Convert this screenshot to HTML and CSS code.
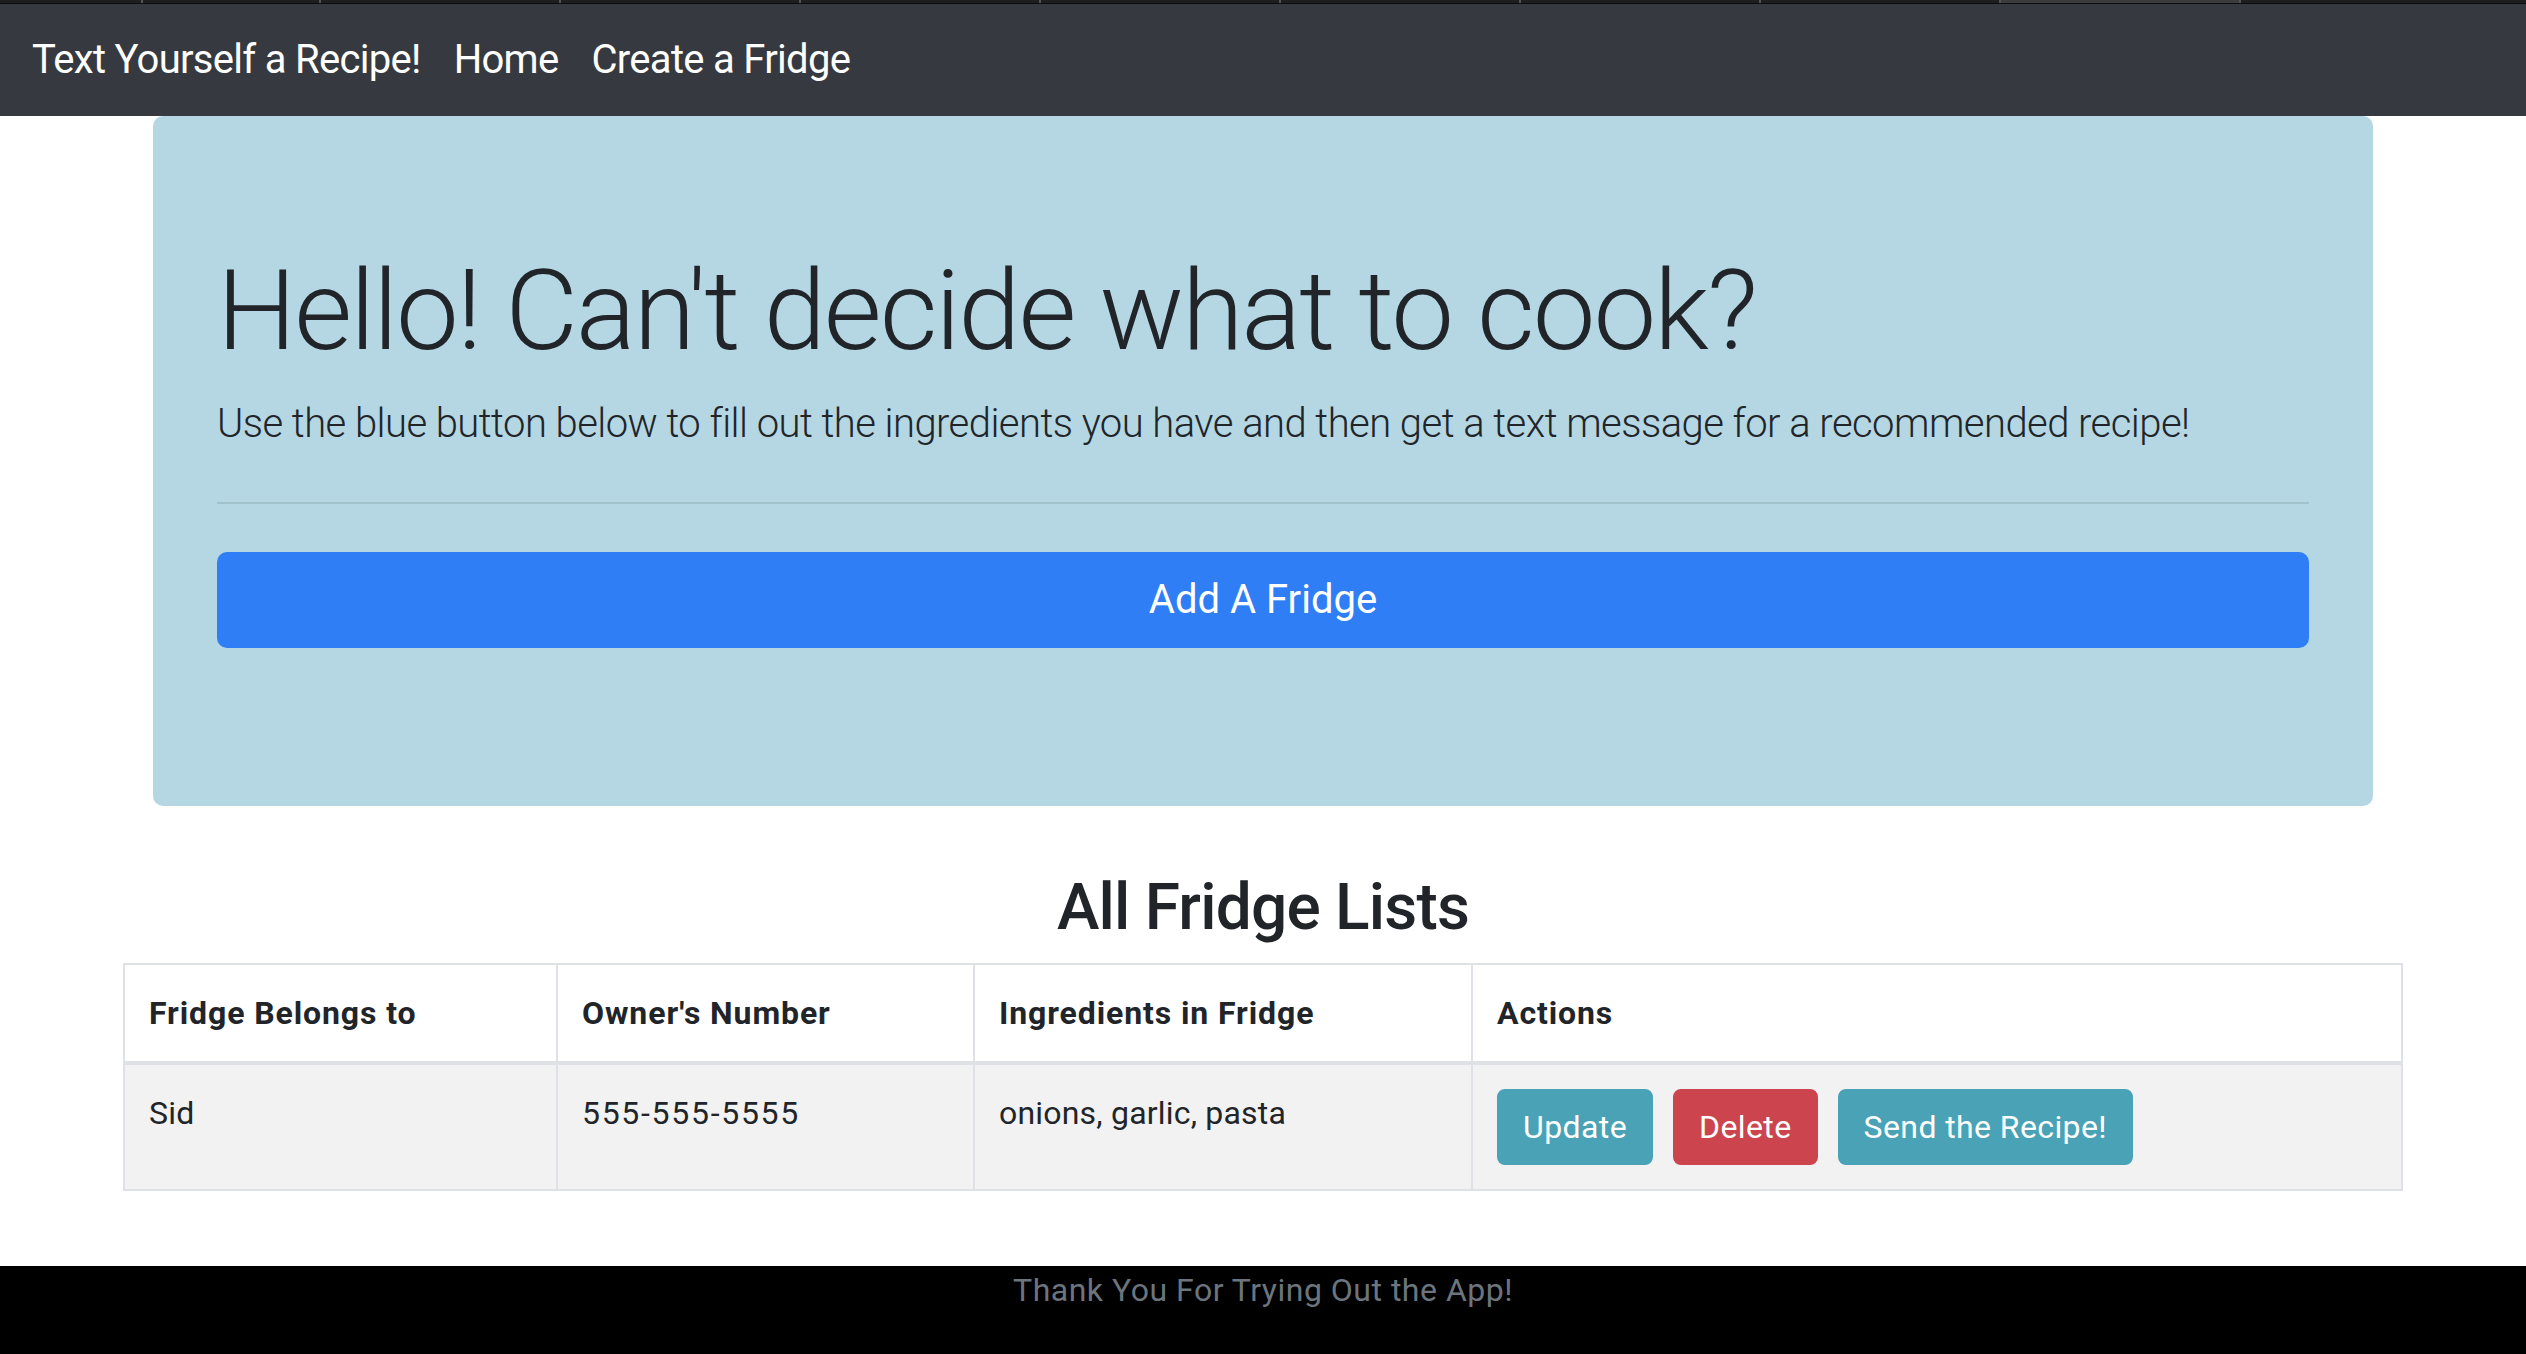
FILE: index.html
```html
<!DOCTYPE html>
<html lang="en">
<head>
<meta charset="utf-8">
<title>Text Yourself a Recipe!</title>
<link rel="stylesheet" href="styles.css">
</head>
<body>
<div class="tabstrip">
  <span class="tab tab-first"></span>
  <span class="tab tab-sm"></span>
  <span class="tab"></span>
  <span class="tab"></span>
  <span class="tab"></span>
  <span class="tab"></span>
  <span class="tab"></span>
  <span class="tab"></span>
  <span class="tab"></span>
  <span class="tab tab-active"></span>
  <span class="tab tab-last"></span>
</div>
<nav class="navbar">
  <a class="nav-item" href="#">Text Yourself a Recipe!</a>
  <a class="nav-item" href="#">Home</a>
  <a class="nav-item" href="#">Create a Fridge</a>
</nav>
<main class="container">
  <section class="jumbotron">
    <h1 class="display">Hello! Can't decide what to cook?</h1>
    <p class="lead">Use the blue button below to fill out the ingredients you have and then get a text message for a recommended recipe!</p>
    <hr class="divider">
    <p class="cta"><a class="btn-block" href="#">Add A Fridge</a></p>
  </section>
  <h2 class="list-title">All Fridge Lists</h2>
  <table class="fridge-table">
    <thead>
      <tr>
        <th class="col-owner">Fridge Belongs to</th>
        <th class="col-number">Owner's Number</th>
        <th class="col-ingredients">Ingredients in Fridge</th>
        <th class="col-actions">Actions</th>
      </tr>
    </thead>
    <tbody>
      <tr class="striped">
        <td>Sid</td>
        <td class="phone">555-555-5555</td>
        <td>onions, garlic, pasta</td>
        <td>
          <div class="actions">
            <a class="btn btn-info" href="#">Update</a>
            <a class="btn btn-danger" href="#">Delete</a>
            <a class="btn btn-info" href="#">Send the Recipe!</a>
          </div>
        </td>
      </tr>
    </tbody>
  </table>
</main>
<footer class="footer">Thank You For Trying Out the App!</footer>
</body>
</html>
```
FILE: styles.css
```css
* { box-sizing: border-box; }

html, body {
  margin: 0;
  padding: 0;
}

body {
  font-family: "Roboto", "Noto Sans", "Liberation Sans", sans-serif;
  font-size: 32px;
  line-height: 1.5;
  color: #212529;
  background: #ffffff;
}

.tabstrip {
  display: flex;
  height: 4px;
  background: #1d1e20;
  border-bottom: 1px solid #0d0d0d;
}
.tab {
  width: 240px;
  border-left: 2px solid #555;
}
.tab-first { width: 141px; border-left: none; }
.tab-sm { width: 178px; }
.tab-active { background: #3b3c3e; }
.tab-last { flex: 1; }

.navbar {
  display: flex;
  align-items: center;
  gap: 33px;
  background: #363a40;
  padding: 16px 32px;
}
.nav-item {
  color: #ffffff;
  text-decoration: none;
  font-size: 40px;
  line-height: 60px;
  padding: 10px 0;
  letter-spacing: -0.7px;
}

.container {
  width: 2280px;
  margin: 0 auto;
}

.jumbotron {
  margin: 0 30px 64px;
  padding: 128px 64px;
  background: #b4d7e3;
  border-radius: 10px;
}

.display {
  margin: 0 0 16px;
  font-size: 112px;
  font-weight: 300;
  line-height: 1.2;
  letter-spacing: -2.1px;
}

.lead {
  margin: 0 0 32px;
  font-size: 40px;
  font-weight: 300;
  line-height: 1.5;
  letter-spacing: -0.55px;
}

.divider {
  margin: 48px 0;
  border: 0;
  border-top: 2px solid rgba(0, 0, 0, 0.1);
}

.cta {
  margin: 0 0 30px;
}

.btn-block {
  display: block;
  text-align: center;
  background: #2f7ef6;
  border: 2px solid #2f7ef6;
  color: #ffffff;
  text-decoration: none;
  font-size: 40px;
  line-height: 60px;
  padding: 16px 32px;
  border-radius: 10px;
}

.list-title {
  margin: 0 0 16px;
  text-align: center;
  font-size: 64px;
  font-weight: 500;
  line-height: 1.2;
  letter-spacing: -0.8px;
}

.fridge-table {
  width: 100%;
  border-collapse: collapse;
  table-layout: fixed;
  margin-bottom: 75px;
}
.fridge-table th,
.fridge-table td {
  border: 2px solid #dee2e6;
  padding: 24px;
  text-align: left;
}
.fridge-table th {
  font-weight: 700;
  vertical-align: bottom;
  border-bottom-width: 4px;
  letter-spacing: 0.9px;
}
.fridge-table td {
  vertical-align: top;
  letter-spacing: 0.2px;
}
.fridge-table td.phone {
  letter-spacing: 1.7px;
}
.col-owner { width: 433px; }
.col-number { width: 417px; }
.col-ingredients { width: 498px; }

.striped td { background: #f2f2f2; }

.actions {
  display: flex;
  gap: 20px;
}

.btn {
  display: inline-block;
  color: #ffffff;
  text-decoration: none;
  font-size: 32px;
  line-height: 48px;
  padding: 12px 24px;
  border: 2px solid transparent;
  border-radius: 8px;
  letter-spacing: 0.4px;
}
.btn-info { background: #4aa2b6; border-color: #4aa2b6; }
.btn-danger { background: #cc454e; border-color: #cc454e; }

.footer {
  height: 88px;
  background: #000000;
  color: #6c757d;
  text-align: center;
  font-size: 32px;
  line-height: 48px;
  letter-spacing: 0.5px;
}
```
